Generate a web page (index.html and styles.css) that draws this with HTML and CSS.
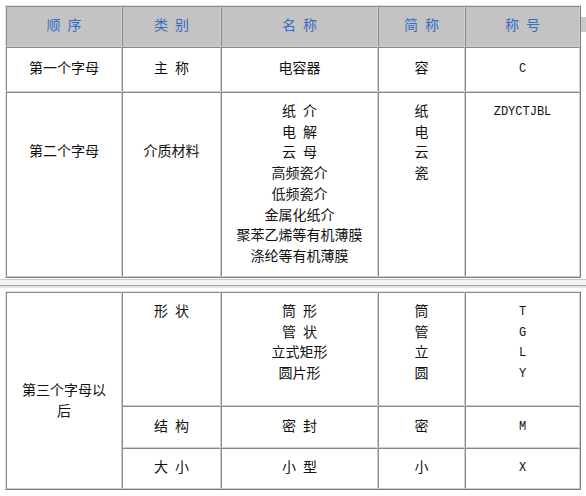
FILE: index.html
```html
<!DOCTYPE html>
<html lang="zh-CN">
<head>
<meta charset="utf-8">
<title>电容器型号命名</title>
<link rel="stylesheet" href="styles.css">
</head>
<body>
<div class="page">
  <table class="grid">
    <colgroup><col class="c1"><col class="c2"><col class="c3"><col class="c4"><col class="c5"></colgroup>
    <thead>
      <tr class="r-head"><th>顺 序</th><th>类 别</th><th>名 称</th><th>简 称</th><th>称 号</th></tr>
    </thead>
    <tbody>
      <tr class="r-one"><td>第一个字母</td><td>主 称</td><td>电容器</td><td>容</td><td class="code">C</td></tr>
      <tr class="r-two">
        <td class="lead">第二个字母</td>
        <td class="lead">介质材料</td>
        <td class="top">纸 介<br>电 解<br>云 母<br>高频瓷介<br>低频瓷介<br>金属化纸介<br>聚苯乙烯等有机薄膜<br>涤纶等有机薄膜</td>
        <td class="top">纸<br>电<br>云<br>瓷</td>
        <td class="top code">ZDYCTJBL</td>
      </tr>
    </tbody>
  </table>
  <div class="seam"></div>
  <table class="grid">
    <colgroup><col class="c1"><col class="c2"><col class="c3"><col class="c4"><col class="c5"></colgroup>
    <tbody>
      <tr class="r-shape">
        <td rowspan="3" class="tall">第三个字母以后</td>
        <td class="top">形 状</td>
        <td class="top">筒 形<br>管 状<br>立式矩形<br>圆片形</td>
        <td class="top">筒<br>管<br>立<br>圆</td>
        <td class="top code">T<br>G<br>L<br>Y</td>
      </tr>
      <tr class="r-struct"><td>结 构</td><td>密 封</td><td>密</td><td class="code">M</td></tr>
      <tr class="r-size"><td>大 小</td><td>小 型</td><td>小</td><td class="code">X</td></tr>
    </tbody>
  </table>
  <div class="edge"></div>
</div>
</body>
</html>
```
FILE: styles.css
```css
html, body {
  margin: 0;
  background: #ffffff;
}

body {
  font-family: "Liberation Mono", "Noto Sans CJK SC", monospace;
  font-size: 14px;
  color: #111111;
}

.page {
  position: relative;
  padding: 5px 0 0 5px;
  width: 581px;
  height: 491px;
}

.grid {
  border-collapse: separate;
  border-spacing: 0;
  table-layout: fixed;
  width: 576px;
  border: 1px solid;
  border-color: #e2e2e2 #7c7c7c #7c7c7c #e2e2e2;
}

.c1 { width: 116px; }
.c2 { width: 99px; }
.c3 { width: 157px; }
.c4 { width: 87px; }
.c5 { width: 115px; }

.grid th,
.grid td {
  border: 1px solid;
  border-color: #888888 #cfcfcf #cfcfcf #888888;
  padding: 0 10px;
  text-align: center;
  vertical-align: middle;
  line-height: 20.7px;
  font-weight: normal;
  word-spacing: -1.4px;
}

.grid th {
  background: #c3c3c3;
  color: #3a6cc0;
}

.r-head { height: 41px; }
.r-one { height: 45px; }
.r-two { height: 185px; }
.r-shape { height: 114px; }
.r-struct { height: 42px; }
.r-size { height: 41px; }

.grid td.top {
  vertical-align: top;
  padding-top: 9px;
}

.grid td.lead {
  vertical-align: top;
  padding-top: 49px;
}

.grid td.tall {
  padding-top: 23px;
}

.code {
  font-family: "Liberation Mono", monospace;
  font-size: 12px;
}

.seam {
  height: 13px;
  width: 586px;
  margin-left: -5px;
  background: linear-gradient(to bottom,
    #ffffff 0 1px,
    #c9c9c9 1px 2px,
    #f3f3f3 2px 7px,
    #a6a6b0 7px 8px,
    #e6e6e6 8px 10px,
    #ffffff 10px 13px);
}

.edge {
  position: absolute;
  left: 581px;
  top: 17px;
  width: 5px;
  height: 15px;
  background: #cacaca;
}
```
